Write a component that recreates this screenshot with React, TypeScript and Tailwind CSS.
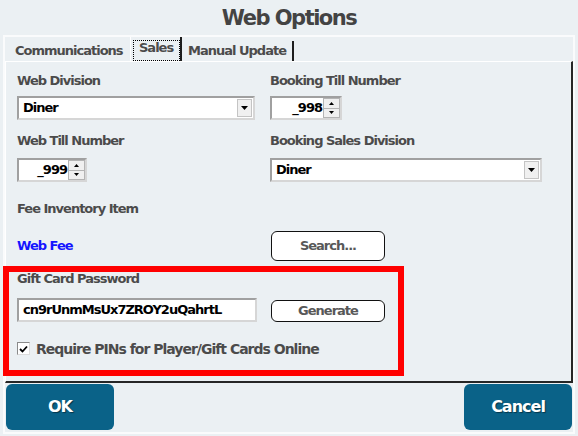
import React from "react"

function DropArrow() {
  return (
    <svg width="7" height="4" viewBox="0 0 7 4">
      <polygon points="0,0 7,0 3.5,4" fill="#000" />
    </svg>
  )
}

function SelectBox({ value, className }: { value: string; className: string }) {
  return (
    <div
      className={
        "h-[24px] bg-white border-2 border-t-[#a0a0a0] border-l-[#a0a0a0] border-b-[#d6d6d6] border-r-[#d6d6d6] flex items-center " +
        className
      }
    >
      <span className="pl-[4px] text-[13px] leading-[16px] tracking-[-1px] text-black">{value}</span>
      <div className="ml-auto mr-[1px] w-[15px] h-[18px] bg-[#f0f0f0] border border-[#c4c4c4] flex items-center justify-center">
        <DropArrow />
      </div>
    </div>
  )
}

function Spinner({ value, className }: { value: string; className: string }) {
  return (
    <div
      className={
        "h-[24px] bg-white border-2 border-t-[#a0a0a0] border-l-[#a0a0a0] border-b-[#d6d6d6] border-r-[#d6d6d6] flex " +
        className
      }
    >
      <span className="flex-1 self-center text-right pr-[1px] text-[13px] leading-[16px] tracking-[-1px] text-black">
        {value}
      </span>
      <div className="w-[17px] flex flex-col">
        <div className="flex-1 bg-[#f0f0f0] border border-[#b4b4b4] flex items-center justify-center">
          <svg width="5" height="3" viewBox="0 0 5 3">
            <polygon points="0,3 5,3 2.5,0" fill="#000" />
          </svg>
        </div>
        <div className="flex-1 bg-[#f0f0f0] border border-[#b4b4b4] border-t-0 flex items-center justify-center">
          <svg width="5" height="3" viewBox="0 0 5 3">
            <polygon points="0,0 5,0 2.5,3" fill="#000" />
          </svg>
        </div>
      </div>
    </div>
  )
}

function Label({ children }: { children: React.ReactNode }) {
  return <p className="h-[16px] text-[13px] leading-[16px] tracking-[-1px] text-[#4b4b4b]">{children}</p>
}

export default function App() {
  return (
    <div className="w-[578px] h-[436px] bg-[#ebf0f3] font-['DejaVu_Sans',sans-serif] font-bold overflow-hidden">
      <div className="h-[35px] flex items-center justify-center text-[21px] leading-[24px] tracking-[-1.5px] text-[#434343]">
        Web Options
      </div>

      <div className="mx-[3px] h-[399px] border-2 border-[#fafbfc] flex flex-col">
        {/* tabs */}
        <div className="h-[24px] flex text-[13px] tracking-[-1px] text-[#4b4b4b] shrink-0">
          <div className="w-[125px] pl-[10px] pt-[6px] leading-[16px]">Communications</div>
          <div className="w-[52px] border-l border-white border-r-2 border-r-[#1e1e1e] pl-[2px] pt-[3px]">
            <div className="h-full border border-dotted border-black pl-[5px] leading-[14px]">Sales</div>
          </div>
          <div className="w-[112px] mt-[4px] border-r-2 border-[#1e1e1e] pl-[6px] pt-[2px] leading-[16px]">
            Manual Update
          </div>
        </div>

        {/* panel */}
        <div className="h-[322px] shrink-0 border-l border-t border-white border-r-2 border-b-2 border-r-[#262626] border-b-[#262626] pt-[11px]">
          <div className="flex">
            <div className="w-[264px] pl-[11px]">
              <Label>Web Division</Label>
            </div>
            <Label>Booking Till Number</Label>
          </div>
          <div className="flex mt-[7px] h-[24px]">
            <div className="w-[264px] pl-[11px]">
              <SelectBox value="Diner" className="w-[238px]" />
            </div>
            <Spinner value="_998" className="w-[72px]" />
          </div>

          <div className="flex mt-[13px]">
            <div className="w-[264px] pl-[11px]">
              <Label>Web Till Number</Label>
            </div>
            <Label>Booking Sales Division</Label>
          </div>
          <div className="flex mt-[9px] h-[24px]">
            <div className="w-[264px] pl-[11px]">
              <Spinner value="_999" className="w-[70px]" />
            </div>
            <SelectBox value="Diner" className="w-[272px]" />
          </div>

          <div className="pl-[11px] mt-[19px]">
            <Label>Fee Inventory Item</Label>
          </div>
          <div className="flex items-center mt-[14px] h-[30px]">
            <div className="w-[265px] pl-[11px] text-[13px] leading-[16px] tracking-[-1px] text-[#1414ff]">Web Fee</div>
            <button className="w-[114px] h-[30px] bg-white border border-[#111] rounded-[6px] text-[13px] tracking-[-1px] text-[#585858]">
              Search...
            </button>
          </div>

          {/* highlighted area */}
          <div className="mt-[5px] ml-[-3px] w-[401px] h-[110px] border-[6px] border-[#ff0000] pl-[8px]">
            <p className="text-[13px] leading-[14px] tracking-[-1px] text-[#4b4b4b]">Gift Card Password</p>
            <div className="flex items-center mt-[12px] h-[24px]">
              <div className="w-[240px] h-[24px] bg-white border-2 border-t-[#a0a0a0] border-l-[#a0a0a0] border-b-[#d6d6d6] border-r-[#d6d6d6] flex items-center pl-[4px] text-[13px] tracking-[-1px] text-black">
                cn9rUnmMsUx7ZROY2uQahrtL
              </div>
              <button className="ml-[14px] w-[114px] h-[22px] mt-[2px] bg-white border border-[#111] rounded-[6px] text-[13px] tracking-[-1px] text-[#585858]">
                Generate
              </button>
            </div>
            <div className="flex items-center mt-[20px] h-[13px]">
              <div className="w-[13px] h-[13px] bg-white border border-t-[#8a8a8a] border-l-[#8a8a8a] border-b-[#dcdcdc] border-r-[#dcdcdc] flex items-center justify-center">
                <svg width="9" height="8" viewBox="0 0 9 8">
                  <path d="M1 4 L3.5 6.5 L8 1.5" stroke="#000" strokeWidth="1.8" fill="none" />
                </svg>
              </div>
              <span className="ml-[6px] text-[14px] leading-[16px] tracking-[-1px] text-[#4b4b4b]">
                Require PINs for Player/Gift Cards Online
              </span>
            </div>
          </div>
        </div>

        {/* buttons */}
        <div className="flex justify-between mt-[1px] px-[1px]">
          <button className="w-[108px] h-[46px] rounded-[6px] bg-[#0a6288] text-white text-[16px] tracking-[-1px] [text-shadow:1px_1px_1px_rgba(0,0,0,0.45)]">
            OK
          </button>
          <button className="w-[108px] h-[46px] rounded-[6px] bg-[#0a6288] text-white text-[16px] tracking-[-1px] [text-shadow:1px_1px_1px_rgba(0,0,0,0.45)]">
            Cancel
          </button>
        </div>
      </div>
    </div>
  )
}
